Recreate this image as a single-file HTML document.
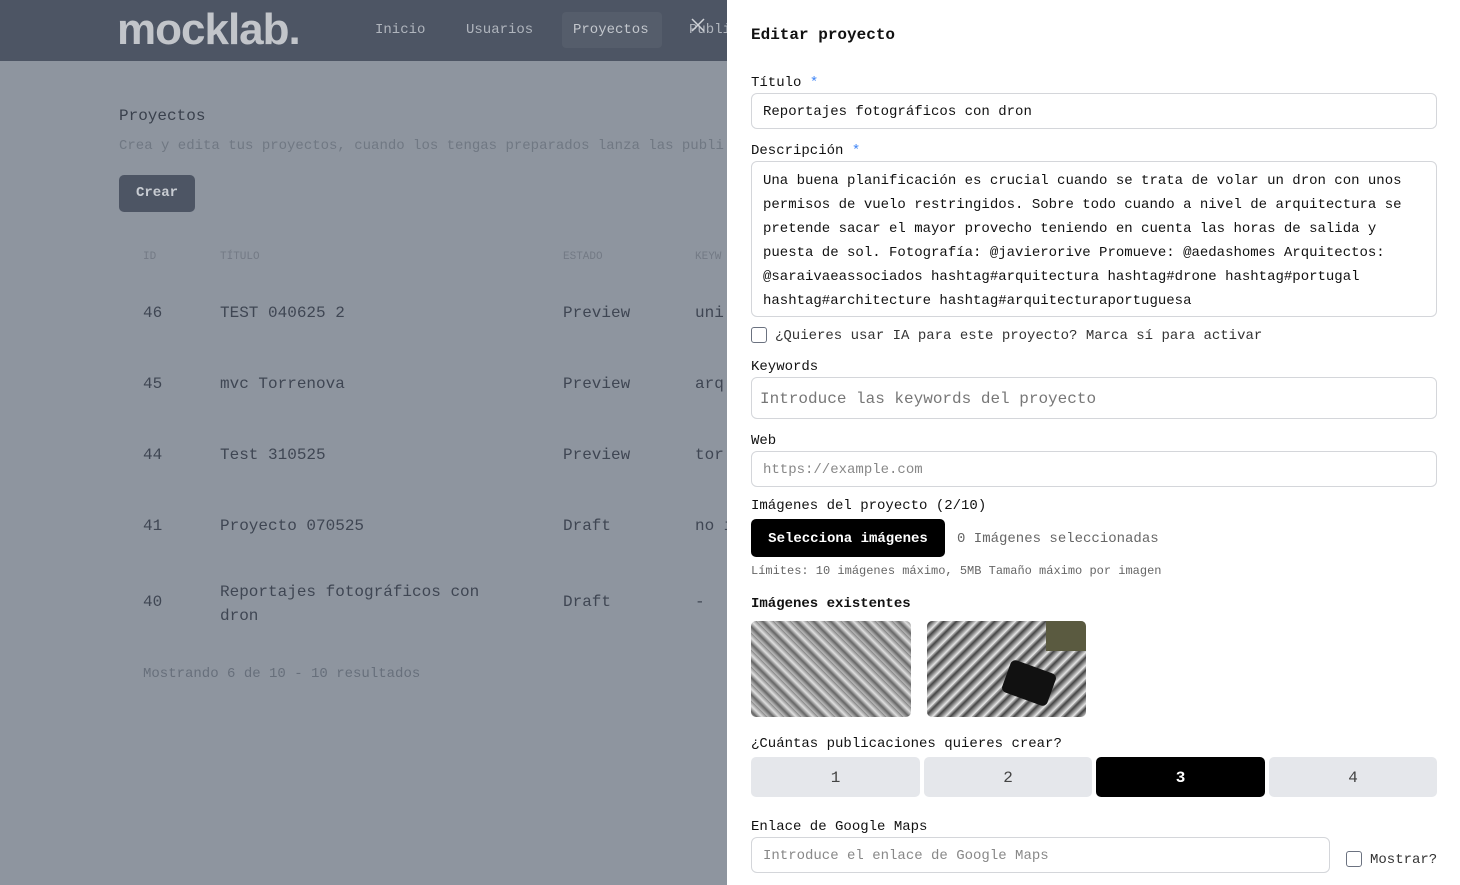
<!DOCTYPE html>
<html><head><meta charset="utf-8"><style>
*{box-sizing:border-box;margin:0;padding:0}
body{width:1460px;height:885px;overflow:hidden;font-family:"Liberation Mono",monospace;background:#8e959f;position:relative}
.hdr{position:absolute;left:0;top:0;width:727px;height:61px;background:#4d5564}
.logo{position:absolute;left:117px;top:5px;font-family:"Liberation Sans",sans-serif;font-weight:bold;font-size:44px;color:#c2c5ca;letter-spacing:-1px}
.nav{position:absolute;top:22px;font-size:14px;color:#b0b5bd}
.navsel{position:absolute;left:562px;top:12px;width:100px;height:36px;background:#555d6b;border-radius:4px}
.x{position:absolute;left:688px;top:14px;font-size:22px;color:#d0d3d8;font-family:"DejaVu Sans",sans-serif;font-weight:100}
.l{position:absolute;color:#3f4653;white-space:nowrap;margin-top:1px}
.panel{position:absolute;left:727px;top:0;width:733px;height:885px;background:#fff}
.p{position:absolute;white-space:nowrap;color:#111;font-size:14px;margin-top:2px}
.inp{position:absolute;border:1px solid #d4d6da;border-radius:6px;background:#fff}
.star{color:#3b82f6}
.cb{position:absolute;width:16px;height:16px;border:1.5px solid #6b7280;border-radius:3px;background:#fff}
.nb{position:absolute;top:757px;height:40px;border-radius:5px;background:#e5e7eb;color:#444;font-size:16px;text-align:center;line-height:40px}
</style></head><body>
<div class="hdr"></div>
<div class="logo">mocklab.</div>
<div class="navsel"></div>
<div class="nav" style="left:375px">Inicio</div>
<div class="nav" style="left:466px">Usuarios</div>
<div class="nav" style="left:573px;color:#c3c7cd">Proyectos</div>
<div class="nav" style="left:689px">Publi</div>
<svg style="position:absolute;left:690px;top:17px" width="16" height="16" viewBox="0 0 16 16"><path d="M2 2L14 14M14 2L2 14" stroke="#d0d3d8" stroke-width="1.5"/></svg>

<div class="l" style="left:119px;top:106px;font-size:16px;color:#3a414d">Proyectos</div>
<div class="l" style="left:119px;top:137px;font-size:14px;color:#707883">Crea y edita tus proyectos, cuando los tengas preparados lanza las publi</div>
<div style="position:absolute;left:119px;top:175px;width:76px;height:37px;background:#4d5564;border-radius:5px;color:#c8ccd2;font-size:14px;font-weight:bold;line-height:37px;text-align:center">Crear</div>
<div class="l" style="left:143px;top:250px;font-size:11px;color:#737a85">ID</div>
<div class="l" style="left:220px;top:250px;font-size:11px;color:#737a85">TÍTULO</div>
<div class="l" style="left:563px;top:250px;font-size:11px;color:#737a85">ESTADO</div>
<div class="l" style="left:695px;top:250px;font-size:11px;color:#737a85">KEYW</div>
<div class="l" style="left:143px;top:303px;font-size:16px">46</div><div class="l" style="left:220px;top:303px;font-size:16px">TEST 040625 2</div><div class="l" style="left:563px;top:303px;font-size:16px">Preview</div><div class="l" style="left:695px;top:303px;font-size:16px">uni</div>
<div class="l" style="left:143px;top:374px;font-size:16px">45</div><div class="l" style="left:220px;top:374px;font-size:16px">mvc Torrenova</div><div class="l" style="left:563px;top:374px;font-size:16px">Preview</div><div class="l" style="left:695px;top:374px;font-size:16px">arq</div>
<div class="l" style="left:143px;top:445px;font-size:16px">44</div><div class="l" style="left:220px;top:445px;font-size:16px">Test 310525</div><div class="l" style="left:563px;top:445px;font-size:16px">Preview</div><div class="l" style="left:695px;top:445px;font-size:16px">tor</div>
<div class="l" style="left:143px;top:516px;font-size:16px">41</div><div class="l" style="left:220px;top:516px;font-size:16px">Proyecto 070525</div><div class="l" style="left:563px;top:516px;font-size:16px">Draft</div><div class="l" style="left:695px;top:516px;font-size:16px">no i</div>
<div class="l" style="left:143px;top:592px;font-size:16px">40</div><div class="l" style="left:220px;top:579px;font-size:16px;line-height:24px">Reportajes fotográficos con<br>dron</div><div class="l" style="left:563px;top:592px;font-size:16px">Draft</div><div class="l" style="left:695px;top:592px;font-size:16px">-</div>
<div class="l" style="left:143px;top:665px;font-size:14px;color:#676f7b">Mostrando 6 de 10 - 10 resultados</div>

<div class="panel"></div>
<div class="p" style="left:751px;top:24px;font-size:16px;font-weight:bold">Editar proyecto</div>
<div class="p" style="left:751px;top:73px">Título <span class="star">*</span></div>
<div class="inp" style="left:751px;top:93px;width:686px;height:36px"></div>
<div class="p" style="left:763px;top:102px">Reportajes fotográficos con dron</div>
<div class="p" style="left:751px;top:141px">Descripción <span class="star">*</span></div>
<div class="inp" style="left:751px;top:161px;width:686px;height:156px"></div>
<div class="p" style="left:763px;top:167px;line-height:24px">Una buena planificación es crucial cuando se trata de volar un dron con unos<br>permisos de vuelo restringidos. Sobre todo cuando a nivel de arquitectura se<br>pretende sacar el mayor provecho teniendo en cuenta las horas de salida y<br>puesta de sol. Fotografía: @javierorive Promueve: @aedashomes Arquitectos:<br>@saraivaeassociados hashtag#arquitectura hashtag#drone hashtag#portugal<br>hashtag#architecture hashtag#arquitecturaportuguesa</div>
<div class="cb" style="left:751px;top:327px"></div>
<div class="p" style="left:775px;top:326px;color:#333">¿Quieres usar IA para este proyecto? Marca sí para activar</div>
<div class="p" style="left:751px;top:357px">Keywords</div>
<div class="inp" style="left:751px;top:377px;width:686px;height:42px"></div>
<div class="p" style="left:760px;top:388px;font-size:16px;color:#777">Introduce las keywords del proyecto</div>
<div class="p" style="left:751px;top:431px">Web</div>
<div class="inp" style="left:751px;top:451px;width:686px;height:36px"></div>
<div class="p" style="left:763px;top:460px;color:#888">https://example.com</div>
<div class="p" style="left:751px;top:496px">Imágenes del proyecto (2/10)</div>
<div style="position:absolute;left:751px;top:519px;width:194px;height:38px;background:#000;border-radius:5px;color:#fff;font-size:14px;font-weight:bold;line-height:40px;text-align:center">Selecciona imágenes</div>
<div class="p" style="left:957px;top:529px;color:#666">0 Imágenes seleccionadas</div>
<div class="p" style="left:751px;top:562px;font-size:12px;color:#666">Límites: 10 imágenes máximo, 5MB Tamaño máximo por imagen</div>
<div class="p" style="left:751px;top:594px;font-weight:bold">Imágenes existentes</div>
<div style="position:absolute;left:751px;top:621px;width:160px;height:96px;border-radius:5px;background:repeating-linear-gradient(45deg,#bbb 0,#555 4px,#ddd 8px,#777 12px),#999;opacity:.9"></div>
<div style="position:absolute;left:927px;top:621px;width:159px;height:96px;border-radius:5px;overflow:hidden;background:repeating-linear-gradient(135deg,#ccc 0,#444 3px,#999 6px,#eee 9px)"><div style="position:absolute;left:78px;top:45px;width:48px;height:34px;background:#111;border-radius:5px;transform:rotate(20deg)"></div><div style="position:absolute;right:0;top:0;width:40px;height:30px;background:#5a5a40"></div></div>
<div class="p" style="left:751px;top:734px">¿Cuántas publicaciones quieres crear?</div>
<div class="nb" style="left:751px;width:169px;line-height:42px">1</div>
<div class="nb" style="left:924px;width:168px;line-height:42px">2</div>
<div class="nb" style="left:1096px;width:169px;background:#000;color:#fff;font-weight:bold;line-height:42px">3</div>
<div class="nb" style="left:1269px;width:168px;line-height:42px">4</div>
<div class="p" style="left:751px;top:817px">Enlace de Google Maps</div>
<div class="inp" style="left:751px;top:837px;width:579px;height:36px"></div>
<div class="p" style="left:763px;top:846px;color:#888">Introduce el enlace de Google Maps</div>
<div class="cb" style="left:1346px;top:851px"></div>
<div class="p" style="left:1370px;top:850px;color:#333">Mostrar?</div>
</body></html>
